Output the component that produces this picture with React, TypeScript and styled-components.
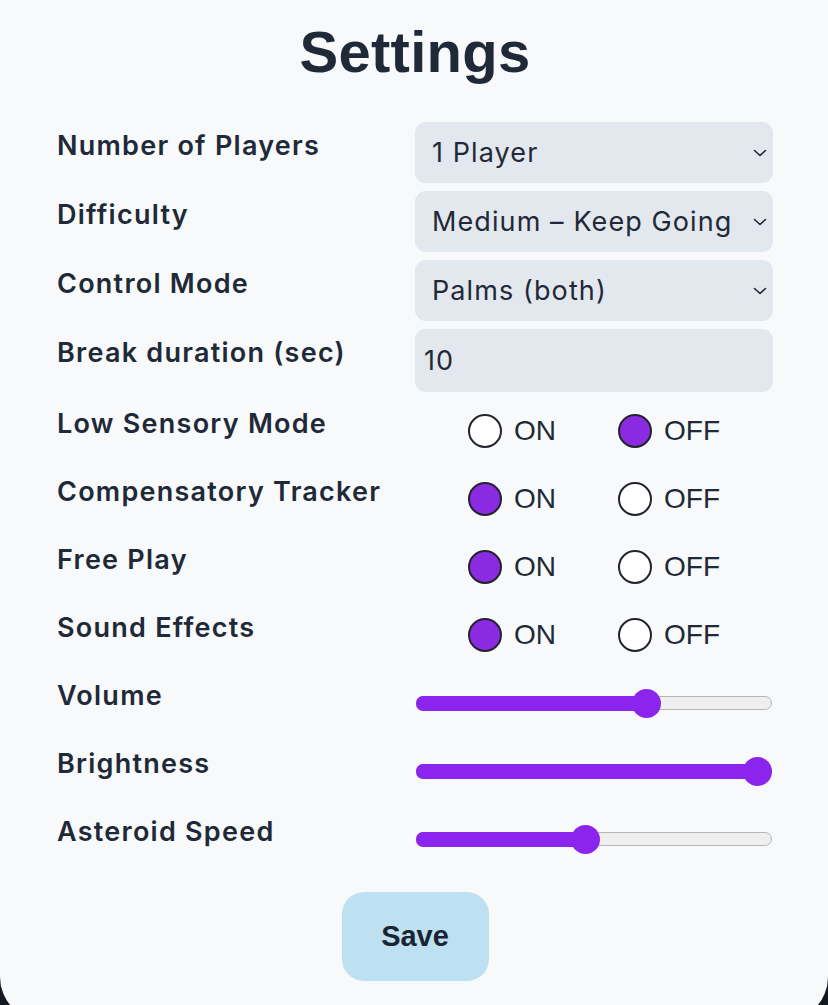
import React from "react";
import styled, { createGlobalStyle } from "styled-components";

const Global = createGlobalStyle`
  html, body {
    margin: 0;
    padding: 0;
    height: 100%;
    overflow: hidden;
    background: #141820;
  }
  * { box-sizing: border-box; }
`;

const Panel = styled.main`
  min-height: calc(100vh + 16px);
  background: #f7f9fb;
  border-radius: 0 0 44px 44px;
  padding: 18px 55px 0 57px;
  color: #1f2937;
  display: flex;
  flex-direction: column;
  align-items: stretch;
`;

const Title = styled.h1`
  margin: 0 0 37px;
  font-family: "Liberation Sans", Arial, sans-serif;
  font-weight: 700;
  font-size: 58px;
  line-height: 67px;
  letter-spacing: 0.3px;
  text-align: center;
  color: #1f2937;
`;

const Form = styled.div`
  display: grid;
  grid-template-columns: 358px 358px;
  row-gap: 8px;
`;

const Label = styled.div`
  font-family: Inter, "Noto Sans", sans-serif;
  font-weight: 600;
  font-size: 27px;
  line-height: 32px;
  letter-spacing: 1.25px;
  padding-top: 8px;
  align-self: start;
  color: #1f2937;
  white-space: nowrap;
`;

const SelectBox = styled.div`
  height: 61px;
  border-radius: 11px;
  background: #e3e7ee;
  display: flex;
  align-items: center;
  justify-content: space-between;
  padding: 0 5px 0 17px;
  font-family: Inter, "Noto Sans", sans-serif;
  font-size: 27px;
  letter-spacing: 1.1px;
  color: #1f2937;
`;

const Chevron = styled.svg`
  width: 16px;
  height: 10px;
  flex: none;
`;

const NumberInput = styled.input`
  height: 63px;
  width: 100%;
  border: none;
  outline: none;
  border-radius: 11px;
  background: #e3e7ee;
  padding: 0 9px;
  font-family: Inter, "Noto Sans", sans-serif;
  font-size: 27px;
  letter-spacing: 1px;
  color: #1f2937;
`;

const RadioGroup = styled.div`
  height: 60px;
  display: flex;
  align-items: center;
  justify-content: center;
  gap: 62px;
  padding-top: 2px;
`;

const RadioOption = styled.label`
  display: flex;
  align-items: center;
  gap: 12px;
  font-family: "Liberation Sans", Arial, sans-serif;
  font-size: 28px;
  color: #1f2937;
`;

const RadioDot = styled.span<{ $checked: boolean }>`
  width: 34px;
  height: 34px;
  border-radius: 50%;
  border: 2px solid #23232b;
  background: ${(p) => (p.$checked ? "#8a2be2" : "#ffffff")};
  flex: none;
`;

const SliderCell = styled.div`
  height: 60px;
  display: flex;
  align-items: center;
  padding: 2px 1px 0 1px;
`;

const Track = styled.div`
  position: relative;
  width: 100%;
  height: 14px;
  border-radius: 7px;
  background: #efefef;
  border: 1.5px solid #b6b6b6;
`;

const Fill = styled.div`
  position: absolute;
  left: -1.5px;
  top: -1.5px;
  bottom: -1.5px;
  border-radius: 7px;
  background: #8b24ec;
`;

const Thumb = styled.div`
  position: absolute;
  top: 50%;
  width: 29px;
  height: 29px;
  margin-left: -14.5px;
  margin-top: -14.5px;
  border-radius: 50%;
  background: #8b24ec;
`;

const Footer = styled.div`
  display: flex;
  justify-content: center;
  padding-top: 24px;
`;

const SaveButton = styled.button`
  width: 147px;
  height: 89px;
  border: none;
  border-radius: 22px;
  background: #bee1f1;
  font-family: "Liberation Sans", Arial, sans-serif;
  font-weight: 700;
  font-size: 29px;
  color: #1a2433;
  cursor: pointer;
`;

const ChevronIcon = () => (
  <Chevron viewBox="0 0 16 10">
    <path d="M2.5 2.5 L8 7.5 L13.5 2.5" fill="none" stroke="#1f2937" strokeWidth="1.6" strokeLinecap="round" strokeLinejoin="round" />
  </Chevron>
);

const Select = ({ value }: { value: string }) => (
  <SelectBox>
    <span>{value}</span>
    <ChevronIcon />
  </SelectBox>
);

const Toggle = ({ on }: { on: boolean }) => (
  <RadioGroup>
    <RadioOption>
      <RadioDot $checked={on} />
      ON
    </RadioOption>
    <RadioOption>
      <RadioDot $checked={!on} />
      OFF
    </RadioOption>
  </RadioGroup>
);

const TRACK = 356;
const THUMB = 29;

const Slider = ({ value }: { value: number }) => {
  const center = THUMB / 2 + (TRACK - THUMB) * value;
  return (
    <SliderCell>
      <Track>
        <Fill style={{ width: center }} />
        <Thumb style={{ left: center - 1.5 }} />
      </Track>
    </SliderCell>
  );
};

export default function App() {
  return (
    <>
      <Global />
      <Panel>
        <Title>Settings</Title>
        <Form>
          <Label>Number of Players</Label>
          <Select value="1 Player" />
          <Label>Difficulty</Label>
          <Select value="Medium – Keep Going" />
          <Label>Control Mode</Label>
          <Select value="Palms (both)" />
          <Label>Break duration (sec)</Label>
          <NumberInput type="text" defaultValue="10" />
          <Label>Low Sensory Mode</Label>
          <Toggle on={false} />
          <Label>Compensatory Tracker</Label>
          <Toggle on={true} />
          <Label>Free Play</Label>
          <Toggle on={true} />
          <Label>Sound Effects</Label>
          <Toggle on={true} />
          <Label>Volume</Label>
          <Slider value={0.661} />
          <Label>Brightness</Label>
          <Slider value={1} />
          <Label>Asteroid Speed</Label>
          <Slider value={0.476} />
        </Form>
        <Footer>
          <SaveButton>Save</SaveButton>
        </Footer>
      </Panel>
    </>
  );
}
